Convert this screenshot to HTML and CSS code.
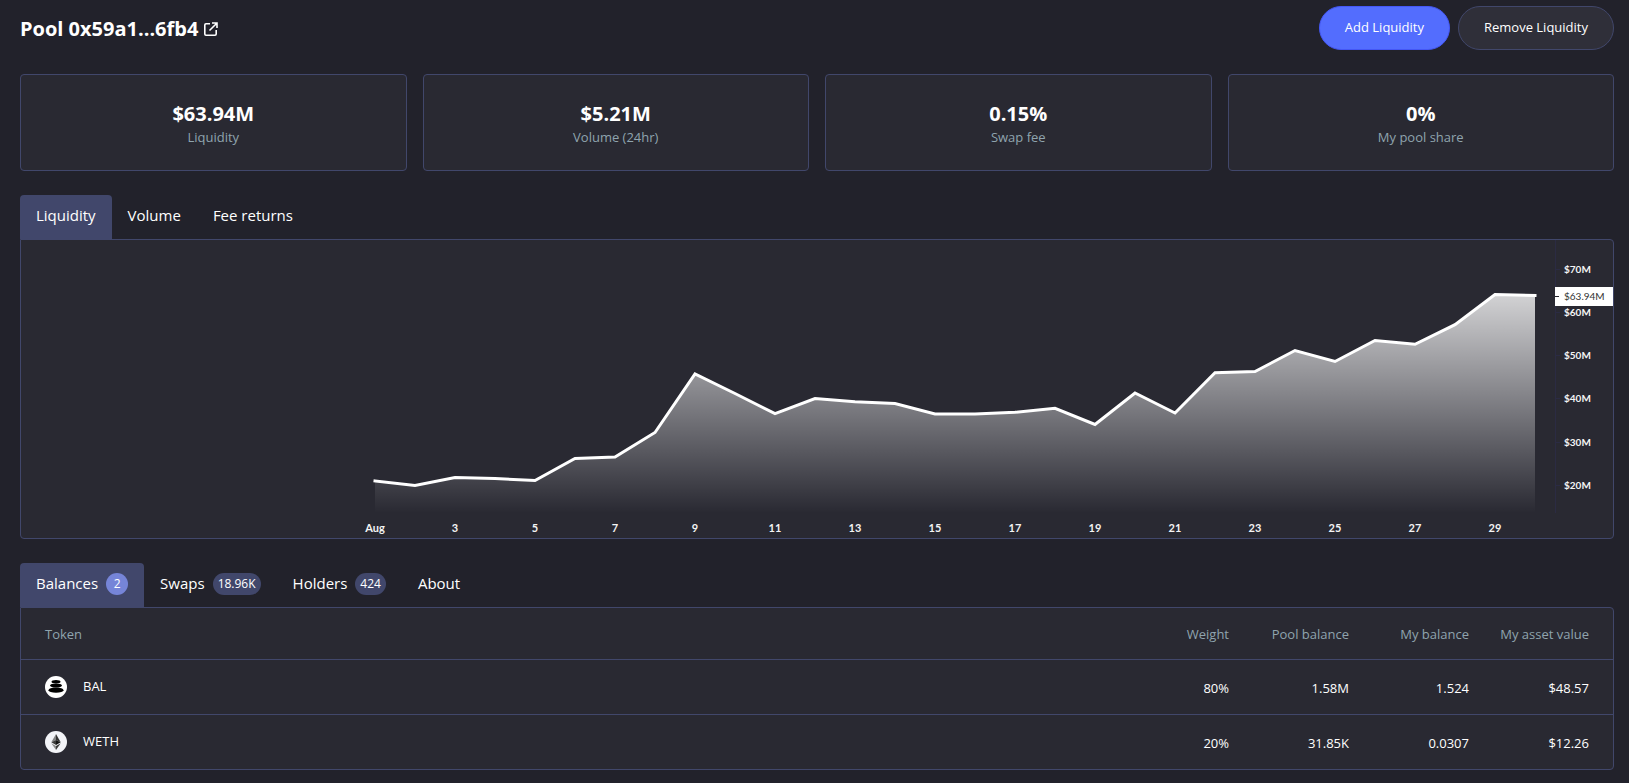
FILE: index.html
```html
<!DOCTYPE html>
<html lang="en">
<head>
<meta charset="utf-8">
<meta name="viewport" content="width=device-width, initial-scale=1">
<title>Pool 0x59a1...6fb4</title>
<link rel="stylesheet" href="styles.css">
</head>
<body>
<main class="page">
  <header class="header">
    <h1 class="title">Pool 0x59a1...6fb4
      <a class="title-link" href="#" aria-label="Open in explorer">
        <svg width="14" height="14" viewBox="0 0 14 14" fill="none" stroke="currentColor" stroke-width="1.600">
          <path d="M6 1.800H2Q.8 1.800 .8 3V12Q.8 13.200 2 13.200H11Q12.200 13.200 12.200 12V8"/>
          <path d="M8 1H13V6M12.800 1.200L5.500 8.500"/>
        </svg>
      </a>
    </h1>
    <div class="actions">
      <button class="button button-primary" type="button">Add Liquidity</button>
      <button class="button" type="button">Remove Liquidity</button>
    </div>
  </header>

  <section class="stats">
    <div class="stat"><strong class="stat-value">$63.94M</strong><span class="stat-label">Liquidity</span></div>
    <div class="stat"><strong class="stat-value">$5.21M</strong><span class="stat-label">Volume (24hr)</span></div>
    <div class="stat"><strong class="stat-value">0.15%</strong><span class="stat-label">Swap fee</span></div>
    <div class="stat"><strong class="stat-value">0%</strong><span class="stat-label">My pool share</span></div>
  </section>

  <section class="block">
    <nav class="tabs">
      <button class="tab tab-active" type="button">Liquidity</button>
      <button class="tab" type="button">Volume</button>
      <button class="tab" type="button">Fee returns</button>
    </nav>
    <div class="panel">
      <svg class="chart" viewBox="0 0 1592 298" role="img" aria-label="Liquidity in August">
        <defs>
          <linearGradient id="area" gradientUnits="userSpaceOnUse" x1="0" y1="52" x2="0" y2="273">
            <stop offset="0" stop-color="#fff" stop-opacity="0.8"/>
            <stop offset="1" stop-color="#fff" stop-opacity="0"/>
          </linearGradient>
        </defs>
        <path fill="url(#area)" d="M354 241L394 245.500L434 237.500L474 238.500L514 240.500L554 218.500L594 217L634 192.500L674 134L714 153.500L754 173.700L794 158.500L834 161.700L874 163.500L914 174L954 174L994 172.300L1034 168.300L1074 184.500L1114 153L1154 173L1194 132.700L1234 131.500L1274 110.500L1314 121.500L1354 100.500L1394 104.300L1434 84.700L1474 54.500L1514 55.500V273H354Z"/>
        <polyline class="chart-line" points="354,241 394,245.500 434,237.500 474,238.500 514,240.500 554,218.500 594,217 634,192.500 674,134 714,153.500 754,173.700 794,158.500 834,161.700 874,163.500 914,174 954,174 994,172.300 1034,168.300 1074,184.500 1114,153 1154,173 1194,132.700 1234,131.500 1274,110.500 1314,121.500 1354,100.500 1394,104.300 1434,84.700 1474,54.500 1514,55.500"/>
        <path class="chart-axis" d="M1534.500 0V273M1534 29.500H1539M1534 72.500H1539M1534 115.500H1539M1534 158.500H1539M1534 202.500H1539M1534 245.500H1539"/>
        <g class="chart-text chart-prices">
          <text x="1543" y="33">$70M</text>
          <text x="1543" y="76">$60M</text>
          <text x="1543" y="119">$50M</text>
          <text x="1543" y="162">$40M</text>
          <text x="1543" y="206">$30M</text>
          <text x="1543" y="249">$20M</text>
        </g>
        <rect x="1534" y="47" width="58" height="19" fill="#fff"/>
        <path d="M1534 56.500H1538" stroke="#22222b"/>
        <text class="chart-current" x="1543" y="60">$63.94M</text>
        <g class="chart-text chart-days">
          <text x="354" y="292">Aug</text>
          <text x="434" y="292">3</text>
          <text x="514" y="292">5</text>
          <text x="594" y="292">7</text>
          <text x="674" y="292">9</text>
          <text x="754" y="292">11</text>
          <text x="834" y="292">13</text>
          <text x="914" y="292">15</text>
          <text x="994" y="292">17</text>
          <text x="1074" y="292">19</text>
          <text x="1154" y="292">21</text>
          <text x="1234" y="292">23</text>
          <text x="1314" y="292">25</text>
          <text x="1394" y="292">27</text>
          <text x="1474" y="292">29</text>
        </g>
      </svg>
    </div>
  </section>

  <section class="block">
    <nav class="tabs">
      <button class="tab tab-active" type="button">Balances <span class="badge">2</span></button>
      <button class="tab" type="button">Swaps <span class="badge">18.96K</span></button>
      <button class="tab" type="button">Holders <span class="badge">424</span></button>
      <button class="tab" type="button">About</button>
    </nav>
    <div class="panel">
      <table class="table">
        <thead>
          <tr><th scope="col">Token</th><th scope="col">Weight</th><th scope="col">Pool balance</th><th scope="col">My balance</th><th scope="col">My asset value</th></tr>
        </thead>
        <tbody>
          <tr>
            <td><span class="token">
              <svg width="22" height="22" viewBox="0 0 22 22"><circle cx="11" cy="11" r="11" fill="#fff"/><ellipse cx="11" cy="14.200" rx="7.500" ry="2.600"/><ellipse cx="11" cy="9.500" rx="6" ry="2"/><ellipse cx="11" cy="5.800" rx="4.500" ry="1.700"/></svg>
              <span class="token-name">BAL</span></span></td>
            <td>80%</td><td>1.58M</td><td>1.524</td><td>$48.57</td>
          </tr>
          <tr>
            <td><span class="token">
              <svg width="22" height="22" viewBox="0 0 22 22"><circle cx="11" cy="11" r="11" fill="#f3f4f8"/><path fill="#828384" d="M11 3L6.300 11.200L11 9Z"/><path fill="#343434" d="M11 3L15.700 11.200L11 9Z"/><path fill="#3c3c3b" d="M6.300 11.200L11 9V14Z"/><path fill="#141414" d="M15.700 11.200L11 9V14Z"/><path fill="#8c8c8c" d="M6.300 12.200L11 15V19Z"/><path fill="#3c3c3b" d="M15.700 12.200L11 15V19Z"/></svg>
              <span class="token-name">WETH</span></span></td>
            <td>20%</td><td>31.85K</td><td>0.0307</td><td>$12.26</td>
          </tr>
        </tbody>
      </table>
    </div>
  </section>
</main>
</body>
</html>
```
FILE: styles.css
```css
* {
  box-sizing: border-box;
}

body {
  margin: 0;
  background: #22222b;
  color: #fff;
  font-family: "Open Sans", "Noto Sans", sans-serif;
  font-size: 13px;
  line-height: 20px;
}

.page {
  display: flex;
  flex-direction: column;
  gap: 24px;
  padding: 6px 15px 12px 20px;
}

.header {
  display: flex;
  align-items: center;
  justify-content: space-between;
}

.title {
  display: flex;
  align-items: center;
  gap: 6px;
  margin: 0;
  padding-top: 2px;
  font-size: 20px;
  line-height: 28px;
  font-weight: 700;
}

.title-link {
  display: flex;
  color: inherit;
}

.actions {
  display: flex;
  gap: 8px;
}

.button {
  height: 44px;
  padding: 0 25px 2px;
  border: 1px solid #41476b;
  border-radius: 22px;
  background: #2f2f39;
  color: #fff;
  font: inherit;
}

.button-primary {
  border-color: #4457f5;
  background: #536dfe;
}

.stats {
  display: grid;
  grid-template-columns: repeat(4, 1fr);
  gap: 16px;
}

.stat {
  display: flex;
  flex-direction: column;
  align-items: center;
  padding: 25px 16px 24px;
  border: 1px solid #41476b;
  border-radius: 4px;
  background: #292932;
}

.stat-value {
  font-size: 20px;
  line-height: 28px;
}

.stat-label {
  color: #8fa4ae;
  line-height: 18px;
}

.tabs {
  display: flex;
}

.tab {
  display: flex;
  align-items: center;
  gap: 8px;
  height: 44px;
  padding: 0 16px 4px;
  border: 0;
  border-radius: 4px 4px 0 0;
  background: none;
  color: #fff;
  font: inherit;
  font-size: 15px;
}

.tab-active {
  background: #41476b;
}

.badge {
  min-width: 22px;
  margin-top: 2px;
  padding: 0 5px;
  border-radius: 11px;
  background: #41476b;
  font-size: 12px;
  line-height: 22px;
}

.tab-active .badge {
  background: #7685d8;
}

.panel {
  border: 1px solid #41476b;
  border-radius: 0 4px 4px 4px;
  background: #292932;
}

.chart {
  display: block;
  width: 100%;
  height: auto;
}

.chart-line {
  fill: none;
  stroke: #fff;
  stroke-width: 3;
  stroke-linecap: square;
}

.chart-axis {
  fill: none;
  stroke: #2b2b43;
}

.chart-text {
  fill: #f4f4f4;
  font-family: Lato, sans-serif;
  font-size: 11px;
  font-weight: 700;
}

.chart-prices {
  font-size: 10px;
}

.chart-days {
  text-anchor: middle;
}

.chart-current {
  fill: #333;
  font-family: Lato, sans-serif;
  font-size: 10px;
}

.table {
  width: 100%;
  border-collapse: collapse;
  table-layout: fixed;
}

.table th,
.table td {
  width: 120px;
  padding: 16px 24px 16px 0;
  text-align: right;
  white-space: nowrap;
}

.table th {
  padding-bottom: 15px;
  color: #8fa4ae;
  font-weight: 400;
}

.table td {
  padding: 17px 24px 15px 0;
  border-top: 1px solid #41476b;
  line-height: 22px;
}

.table th:first-child,
.table td:first-child {
  width: auto;
  padding: 16px 0 16px 24px;
  text-align: left;
}

.table th:first-child {
  padding-bottom: 15px;
}

.token {
  display: flex;
  align-items: center;
  gap: 16px;
}

.token-name {
  padding-bottom: 2px;
  line-height: 20px;
}
```
